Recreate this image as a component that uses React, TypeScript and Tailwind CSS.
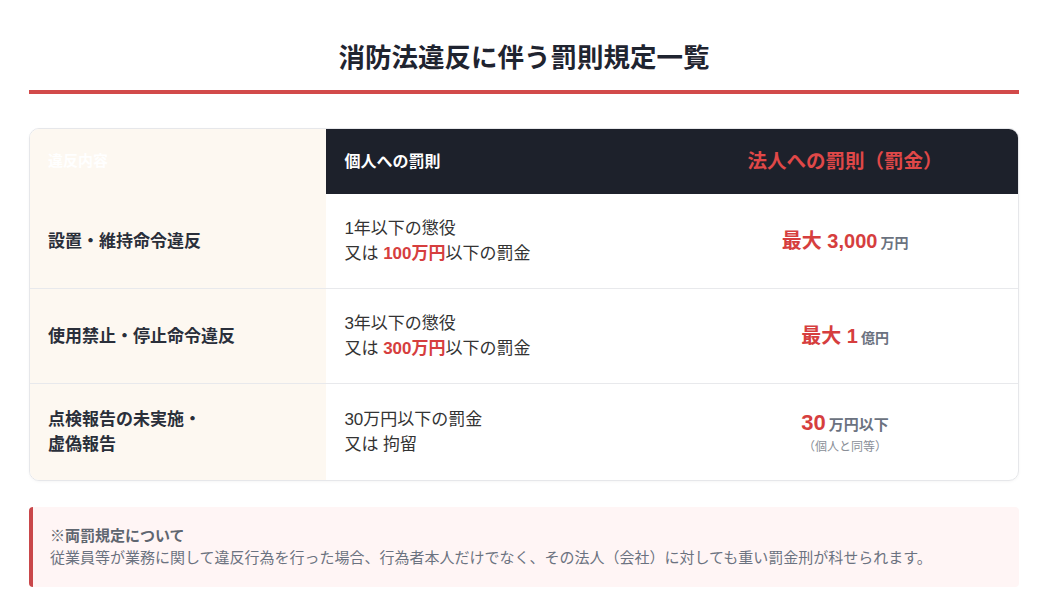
import React from "react";

const FONT = { fontFamily: '"Liberation Sans", "Noto Sans CJK JP", sans-serif' };

type Row = {
  label: React.ReactNode;
  person: React.ReactNode;
  corp: React.ReactNode;
  h: string;
};

const rows: Row[] = [
  {
    label: "設置・維持命令違反",
    person: (
      <>
        <div>1年以下の懲役</div>
        <div>
          又は <span className="font-bold text-[#d63e3e]">100万円</span>以下の罰金
        </div>
      </>
    ),
    corp: (
      <div className="flex items-baseline gap-[3px]">
        <span className="text-[20px] font-bold text-[#d63e3e]">最大 3,000</span>
        <span className="text-[14px] font-bold text-[#6b7280]">万円</span>
      </div>
    ),
    h: "h-[95px]",
  },
  {
    label: "使用禁止・停止命令違反",
    person: (
      <>
        <div>3年以下の懲役</div>
        <div>
          又は <span className="font-bold text-[#d63e3e]">300万円</span>以下の罰金
        </div>
      </>
    ),
    corp: (
      <div className="flex items-baseline gap-[3px]">
        <span className="text-[20px] font-bold text-[#d63e3e]">最大 1</span>
        <span className="text-[14px] font-bold text-[#6b7280]">億円</span>
      </div>
    ),
    h: "h-[95px]",
  },
  {
    label: (
      <>
        <div>点検報告の未実施・</div>
        <div>虚偽報告</div>
      </>
    ),
    person: (
      <>
        <div>30万円以下の罰金</div>
        <div>又は 拘留</div>
      </>
    ),
    corp: (
      <div className="flex flex-col items-center">
        <div className="flex items-baseline gap-[3px]">
          <span className="text-[22px] font-bold leading-[28px] text-[#d63e3e]">30</span>
          <span className="text-[15px] font-bold text-[#6b7280]">万円以下</span>
        </div>
        <div className="mt-[2px] text-[12px] leading-[16px] text-[#8a8f98]">（個人と同等）</div>
      </div>
    ),
    h: "h-[96px]",
  },
];

export default function App() {
  return (
    <div className="min-h-[615px] w-full bg-white" style={FONT}>
      <div className="pl-[29px] pr-[24px] pt-[40px]">
        <h1 className="border-b-4 border-[#d24a4a] pb-[13px] text-center text-[26.5px] font-bold leading-[37px] text-[#1f2430]">
          消防法違反に伴う罰則規定一覧
        </h1>

        <div className="mt-[34px] overflow-hidden rounded-[10px] border border-[#e6e7ea] shadow-[0_1px_3px_rgba(0,0,0,0.04)]">
          <div className="grid h-[65px] grid-cols-[30%_35%_35%]">
            <div className="flex items-center bg-[#fdf8f1] pl-[18px] text-[15px] font-bold text-white">
              違反内容
            </div>
            <div className="flex items-center bg-[#1d212b] pl-[18px] text-[16px] font-bold text-white">
              個人への罰則
            </div>
            <div className="flex items-center justify-center bg-[#1d212b] text-[19.5px] font-bold text-[#e04848]">
              法人への罰則（罰金）
            </div>
          </div>
          {rows.map((r, i) => (
            <div
              key={i}
              className={`grid grid-cols-[30%_35%_35%] ${r.h} ${i < rows.length - 1 ? "border-b border-[#e8e9ec]" : ""}`}
            >
              <div className="flex flex-col justify-center bg-[#fdf8f1] pl-[18px] text-[17px] font-bold leading-[25px] text-[#2a2f3a]">
                {r.label}
              </div>
              <div className="flex flex-col justify-center pl-[18px] text-[17px] leading-[25px] text-[#333]">
                {r.person}
              </div>
              <div className="flex items-center justify-center">{r.corp}</div>
            </div>
          ))}
        </div>

        <div className="mt-[26px] flex h-[80px] flex-col justify-center rounded-[4px] border-l-4 border-[#c9474a] bg-[#fff5f5] pl-[17px]">
          <div className="text-[15px] font-bold leading-[22px] text-[#5f6670]">※両罰規定について</div>
          <div className="text-[15px] leading-[22px] text-[#6b7280]">
            従業員等が業務に関して違反行為を行った場合、行為者本人だけでなく、その法人（会社）に対しても重い罰金刑が科せられます。
          </div>
        </div>
      </div>
    </div>
  );
}
